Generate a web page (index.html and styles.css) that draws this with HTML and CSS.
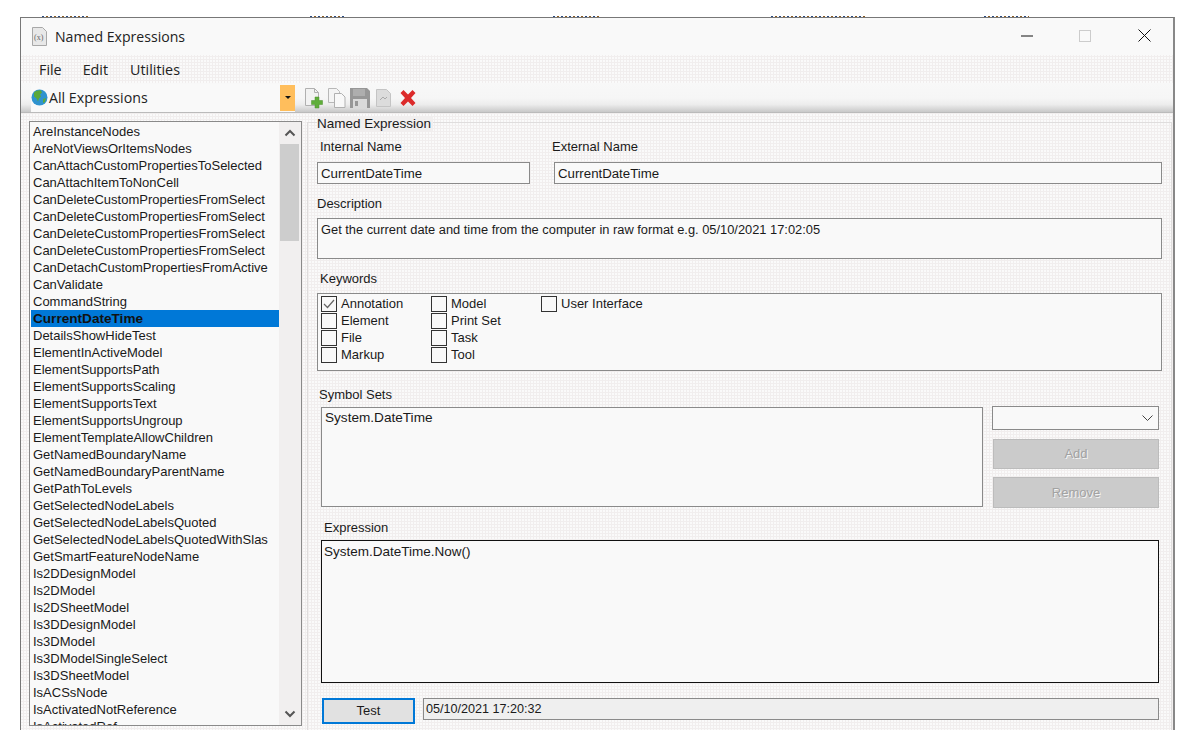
FILE: index.html
```html
<!DOCTYPE html>
<html lang="en">
<head>
<meta charset="utf-8">
<title>Named Expressions</title>
<link rel="stylesheet" href="styles.css">
</head>
<body>
<div class="behind"><i class="m1"></i><i class="m2"></i><i class="m3"></i><i class="m4"></i><i class="m5"></i></div>
<div class="window">
  <header class="titlebar">
    <svg class="app-icon" width="17" height="19" viewBox="0 0 17 19"><path d="M1.500.5h10l4 4v14h-14z" fill="#e8e8e8" stroke="#a8a8a8"/><text x="3" y="13" class="app-x">(x)</text></svg>
    <span class="title">Named Expressions</span>
    <div class="caption">
      <svg class="cap-min" width="12" height="2" viewBox="0 0 12 2"><path d="M0 1h12" stroke="#111"/></svg>
      <svg width="12" height="12" viewBox="0 0 12 12"><rect x=".5" y=".5" width="11" height="11" fill="none" stroke="#ccc"/></svg>
      <svg width="13" height="13" viewBox="0 0 13 13"><path d="M.5.5l12 12M12.500.5l-12 12" stroke="#111" fill="none"/></svg>
    </div>
  </header>
  <nav class="menu"><span>File</span><span>Edit</span><span class="menu-last">Utilities</span></nav>
  <div class="toolbar">
    <div class="filter">
      <svg width="17" height="17" viewBox="0 0 17 17"><circle cx="8.500" cy="8.500" r="8" fill="#2f93cf"/><path d="M3 3.500c2-2 5-2.500 7-2l1 2-2 2 1 2-2 2-1 3-1.500-3L3 7.500z" fill="#5aa83a"/><path d="M12 10l3-1-1 4-2 1z" fill="#5aa83a"/></svg>
      <span class="filter-text">All Expressions</span>
      <div class="drop"><i></i></div>
    </div>
    <div class="tools">
      <svg width="20" height="22" viewBox="0 0 20 22"><path d="M1.500 1.500h9l4 4v13h-13z" fill="#f2f2f2" stroke="#b0b0b0"/><path d="M10.500 1.500v4h4" fill="none" stroke="#b0b0b0"/><path d="M11 10h4v3.500h3.500v4H15V21h-4v-3.500H7.500v-4H11z" fill="#5fae3a" stroke="#4c8f2c" stroke-width=".5"/></svg>
      <svg width="20" height="22" viewBox="0 0 20 22"><path d="M1.500 1.500h8l3 3v11h-11z" fill="#f4f4f4" stroke="#b8b8b8"/><path d="M7.500 6.500h7l3.500 3.500v10.500H7.500z" fill="#f8f8f8" stroke="#b0b0b0"/></svg>
      <svg width="20" height="22" viewBox="0 0 20 22"><path d="M0 1h17l3 3v17H0z" fill="#979797"/><rect x="3" y="2" width="12" height="7" fill="#aeaeae"/><rect x="3" y="12" width="14" height="9" fill="#dadada"/><rect x="5" y="14" width="3" height="5" fill="#979797"/></svg>
      <svg class="tool-4" width="18" height="22" viewBox="0 0 18 22"><path d="M1.500 2.500h10l4 4v13h-14z" fill="#dcdcdc" stroke="#c4c4c4"/><path d="M5 13l3-3 2 2 2-2" fill="none" stroke="#aaa"/></svg>
      <svg class="tool-5" width="18" height="18" viewBox="0 0 18 18"><path d="M1.500 4l3-3 4.500 4.500L13.500 1l3 3-4.500 5 4.500 5-3 3L9 12.500 4.500 17l-3-3L6 9z" fill="#dc2b2b"/></svg>
    </div>
  </div>
  <main class="content">
    <aside class="listbox">
      <ul class="items">
        <li>AreInstanceNodes</li>
        <li>AreNotViewsOrItemsNodes</li>
        <li>CanAttachCustomPropertiesToSelected</li>
        <li>CanAttachItemToNonCell</li>
        <li>CanDeleteCustomPropertiesFromSelect</li>
        <li>CanDeleteCustomPropertiesFromSelect</li>
        <li>CanDeleteCustomPropertiesFromSelect</li>
        <li>CanDeleteCustomPropertiesFromSelect</li>
        <li>CanDetachCustomPropertiesFromActive</li>
        <li>CanValidate</li>
        <li>CommandString</li>
        <li class="selected">CurrentDateTime</li>
        <li>DetailsShowHideTest</li>
        <li>ElementInActiveModel</li>
        <li>ElementSupportsPath</li>
        <li>ElementSupportsScaling</li>
        <li>ElementSupportsText</li>
        <li>ElementSupportsUngroup</li>
        <li>ElementTemplateAllowChildren</li>
        <li>GetNamedBoundaryName</li>
        <li>GetNamedBoundaryParentName</li>
        <li>GetPathToLevels</li>
        <li>GetSelectedNodeLabels</li>
        <li>GetSelectedNodeLabelsQuoted</li>
        <li>GetSelectedNodeLabelsQuotedWithSlas</li>
        <li>GetSmartFeatureNodeName</li>
        <li>Is2DDesignModel</li>
        <li>Is2DModel</li>
        <li>Is2DSheetModel</li>
        <li>Is3DDesignModel</li>
        <li>Is3DModel</li>
        <li>Is3DModelSingleSelect</li>
        <li>Is3DSheetModel</li>
        <li>IsACSsNode</li>
        <li>IsActivatedNotReference</li>
        <li>IsActivatedRef</li>
      </ul>
      <div class="scrollbar">
        <svg width="12" height="8" viewBox="0 0 12 8"><path d="M1.500 6.500l4.500-4.500 4.500 4.500" fill="none" stroke="#555" stroke-width="2"/></svg>
        <div class="track"><div class="thumb"></div></div>
        <svg width="12" height="8" viewBox="0 0 12 8"><path d="M1.500 1.500l4.500 4.500 4.500-4.500" fill="none" stroke="#555" stroke-width="2"/></svg>
      </div>
    </aside>
    <section class="panel">
      <div class="legend"><span>Named Expression</span></div>
      <div class="name-labels"><span class="lbl-int">Internal Name</span><span>External Name</span></div>
      <div class="name-fields">
        <div class="field f-int">CurrentDateTime</div>
        <div class="field f-ext">CurrentDateTime</div>
      </div>
      <div class="lbl-desc">Description</div>
      <div class="field desc">Get the current date and time from the computer in raw format e.g. 05/10/2021 17:02:05</div>
      <div class="lbl-key">Keywords</div>
      <div class="keywords">
        <div class="kw-col">
          <label class="kw"><span class="cb"><svg width="12" height="10" viewBox="0 0 12 10"><path d="M1 5l3.500 3.500L11 1" fill="none" stroke="#666" stroke-width="1.200"/></svg></span>Annotation</label>
          <label class="kw"><span class="cb"></span>Element</label>
          <label class="kw"><span class="cb"></span>File</label>
          <label class="kw"><span class="cb"></span>Markup</label>
        </div>
        <div class="kw-col">
          <label class="kw"><span class="cb"></span>Model</label>
          <label class="kw"><span class="cb"></span>Print Set</label>
          <label class="kw"><span class="cb"></span>Task</label>
          <label class="kw"><span class="cb"></span>Tool</label>
        </div>
        <div class="kw-col">
          <label class="kw"><span class="cb"></span>User Interface</label>
        </div>
      </div>
      <div class="lbl-sym">Symbol Sets</div>
      <div class="symbols">
        <div class="sym-box">System.DateTime</div>
        <div class="sym-side">
          <div class="combo"><svg width="11" height="6" viewBox="0 0 11 6"><path d="M.5.5l5 5 5-5" fill="none" stroke="#444"/></svg></div>
          <div class="btn-off b-add">Add</div>
          <div class="btn-off b-rem">Remove</div>
        </div>
      </div>
      <div class="lbl-exp">Expression</div>
      <div class="expr">System.DateTime.Now()</div>
      <div class="test-row">
        <div class="test">Test</div>
        <div class="output">05/10/2021 17:20:32</div>
      </div>
    </section>
  </main>
</div>
</body>
</html>
```
FILE: styles.css
```css
* { box-sizing: border-box; }
html, body { margin: 0; padding: 0; }
body {
  width: 1196px;
  height: 752px;
  background: #fff;
  overflow: hidden;
  padding: 16px 21px 22px 20px;
  font-family: "Liberation Sans", Arial, sans-serif;
  font-size: 13px;
  color: #1a1a1a;
}
.behind {
  height: 1px;
  display: flex;
}
.behind i {
  display: block;
  height: 1px;
  background: repeating-linear-gradient(90deg, #2a4a80 0 2px, transparent 2px 4px, #8a5a20 4px 6px, transparent 6px 8px);
}
.m1 { width: 48px; margin-left: 22px; }
.m2 { width: 36px; margin-left: 220px; }
.m3 { width: 46px; margin-left: 207px; }
.m4 { width: 95px; margin-left: 172px; }
.m5 { width: 45px; margin-left: 118px; }
.window {
  width: 1155px;
  height: 713px;
  border: 1px solid #777;
  border-right: 2px solid #888;
  border-bottom: 0;
  background: radial-gradient(circle at 1px 1px, #fbfbfb 0 .7px, transparent .8px) 0 0 / 3px 3px #f1eeee;
  display: flex;
  flex-direction: column;
}
.titlebar {
  height: 37px;
  flex: none;
  background: #f9f9f9;
  display: flex;
  align-items: center;
  padding-left: 10px;
}
.app-icon { margin-right: 7px; }
.app-x { font: 8px "Liberation Serif", serif; fill: #666; }
.title { font: 14.100px "Open Sans", sans-serif; color: #222; }
.caption {
  margin-left: auto;
  display: flex;
  align-items: center;
  gap: 47px;
  padding-right: 22px;
  padding-bottom: 2px;
}
.cap-min { margin-right: -1px; }
.menu {
  height: 28px;
  flex: none;
  display: flex;
  align-items: center;
  gap: 21px;
  padding-left: 18px;
  font: 14.300px "Open Sans", sans-serif;
  color: #222;
}
.menu-last { margin-left: 1px; }
.toolbar {
  height: 30px;
  flex: none;
  display: flex;
  align-items: center;
  background: linear-gradient(#f8f8f8 0, #f6f6f6 50%, #ececec 72%, #c8c8c8 97%, #aaa 100%);
  padding-left: 10px;
  padding-right: 2px;
}
.filter {
  width: 264px;
  height: 28px;
  margin-top: -1px;
  background: #f9f9f9;
  display: flex;
  align-items: center;
}
.filter-text { font: 14.200px "Open Sans", sans-serif; color: #222; margin: -1px 0 0 1px; }
.drop {
  margin-left: auto;
  width: 15px;
  height: 26px;
  background: #ffbe5c;
  display: flex;
  align-items: center;
  justify-content: center;
}
.drop i {
  width: 0;
  height: 0;
  border: 3px solid transparent;
  border-top: 3px solid #111;
  border-bottom: 0;
  display: block;
}
.tools {
  display: flex;
  align-items: center;
  gap: 3px;
  margin: -1px 0 0 9px;
}
.tool-4 { margin-left: 2px; }
.tool-5 { margin-left: 3px; }
.content {
  flex: 1;
  min-height: 0;
  display: flex;
  align-items: flex-start;
  padding: 8px 0 0 8px;
}
.listbox {
  width: 273px;
  height: 605px;
  flex: none;
  border: 1px solid #8a8a8a;
  background: #f9f9f9;
  display: flex;
  overflow: hidden;
}
.items {
  list-style: none;
  margin: 0;
  padding: 1px 0 0 1px;
  width: 249px;
  flex: none;
  overflow: hidden;
}
.items li {
  height: 17px;
  line-height: 17px;
  padding-left: 2px;
  white-space: nowrap;
  overflow: hidden;
}
.items .selected {
  background: #0078d7;
  font-weight: 700;
  font-size: 13.600px;
  color: #111;
}
.scrollbar {
  flex: 1;
  display: flex;
  flex-direction: column;
  align-items: center;
  background: #f1efef;
  padding: 0 2px 0 1px;
}
.scrollbar svg { flex: none; margin: 7px 0; }
.track { flex: 1; width: 100%; }
.thumb { height: 97px; background: #cdcdcd; }
.panel {
  width: 865px;
  height: 608px;
  margin-left: 5px;
  margin-top: 1px;
  display: flex;
  flex-direction: column;
  border: 1px solid #dfdddd;
  border-bottom: 0;
  padding-left: 9px;
}
.legend {
  height: 16px;
  line-height: 16px;
  margin-top: -7px;
  font-size: 13.500px;
  color: #1a1a1a;
}
.legend span { background: #f1efef; padding-right: 2px; }
.name-labels {
  display: flex;
  height: 16px;
  line-height: 16px;
  margin-top: 7px;
}
.lbl-int { width: 232px; margin-left: 3px; }
.name-fields { display: flex; margin-top: 7px; }
.field {
  border: 1px solid #8a8a8a;
  background: #f9f9f9;
  height: 22px;
  line-height: 21px;
  padding-left: 3px;
  font-size: 13.250px;
}
.f-int { width: 213px; }
.f-ext { width: 608px; margin-left: 24px; }
.lbl-desc { height: 16px; line-height: 16px; margin-top: 12px; }
.field.desc { width: 845px; height: 41px; margin-top: 6px; font-size: 12.850px; }
.lbl-key { height: 16px; line-height: 16px; margin: 12px 0 0 3px; }
.keywords {
  width: 845px;
  height: 78px;
  margin-top: 6px;
  border: 1px solid #8a8a8a;
  background: #f9f9f9;
  display: flex;
  padding: 1px 0 0 3px;
}
.kw-col { width: 110px; display: flex; flex-direction: column; }
.kw { display: flex; align-items: center; height: 17px; white-space: nowrap; }
.cb {
  width: 16px;
  height: 16px;
  border: 1px solid #333;
  background: #f9f9f9;
  margin-right: 4px;
  display: flex;
  align-items: center;
  justify-content: center;
}
.lbl-sym { height: 16px; line-height: 16px; margin: 16px 0 0 2px; }
.symbols { display: flex; align-items: flex-start; margin: 4px 0 0 4px; }
.sym-box {
  width: 662px;
  height: 100px;
  border: 1px solid #8a8a8a;
  background: #f9f9f9;
  padding: 1px 3px;
  line-height: 17px;
  font-size: 13.600px;
}
.sym-side { width: 168px; margin-left: 9px; margin-top: -1px; }
.combo {
  width: 167px;
  height: 24px;
  border: 1px solid #8a8a8a;
  background: #f9f9f9;
  display: flex;
  align-items: center;
  justify-content: flex-end;
  padding-right: 5px;
}
.btn-off {
  width: 166px;
  margin-left: 1px;
  background: #cbcbcb;
  border: 1px solid #bcbcbc;
  display: flex;
  align-items: center;
  justify-content: center;
  color: #a2a2a2;
  text-shadow: 1px 1px 0 #f4f4f4;
}
.b-add { height: 30px; margin-top: 9px; padding-bottom: 2px; }
.b-rem { height: 31px; margin-top: 8px; }
.lbl-exp { height: 16px; line-height: 16px; margin: 12px 0 0 7px; }
.expr {
  width: 838px;
  height: 143px;
  margin: 4px 0 0 4px;
  border: 1px solid #111;
  background: #f9f9f9;
  padding: 3px 2px;
  line-height: 16px;
  font-size: 13.500px;
}
.test-row { display: flex; align-items: flex-start; margin: 15px 0 0 5px; }
.test {
  width: 93px;
  height: 26px;
  border: 2px solid #0078d7;
  background: #e1e1e1;
  text-align: center;
  line-height: 22px;
}
.output {
  width: 736px;
  height: 22px;
  margin-left: 8px;
  border: 1px solid #8a8a8a;
  background: #efefef;
  line-height: 20px;
  padding-left: 2px;
  font-size: 12.600px;
}
```
